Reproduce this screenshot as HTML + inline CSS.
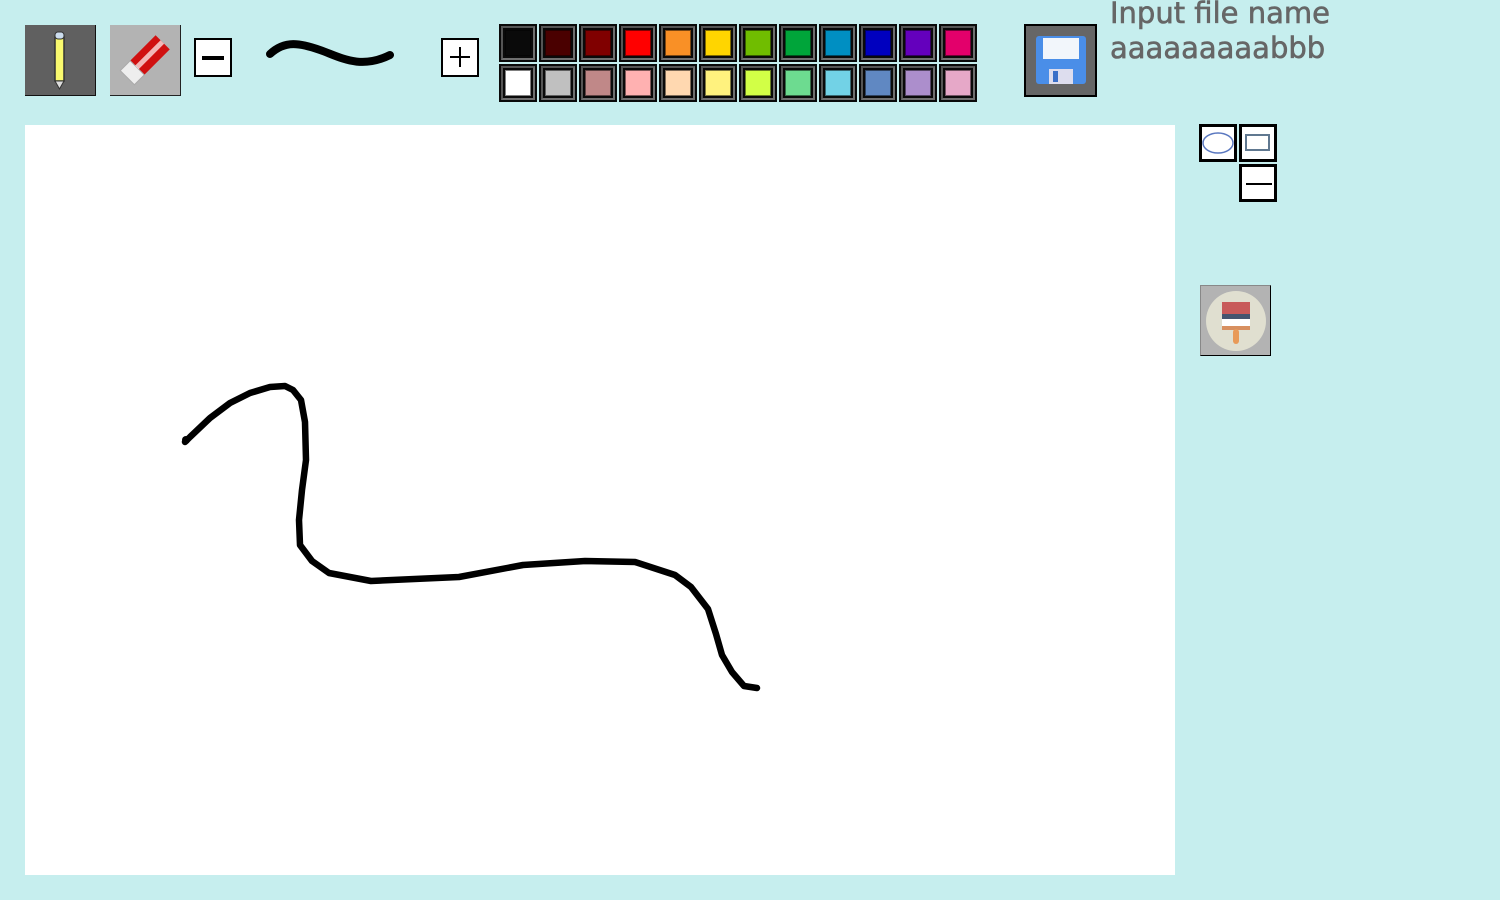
<!DOCTYPE html>
<html><head><style>
body{margin:0;width:1500px;height:900px;background:#c6eeee;position:relative;overflow:hidden;font-family:"DejaVu Sans","Liberation Sans",sans-serif}
.a{position:absolute;box-sizing:border-box}
.sw{position:absolute;width:38px;height:38px;background:#0a0a0a}
.sw i{position:absolute;left:2px;top:2px;width:34px;height:34px;box-sizing:border-box;border:2px solid #6f6f6f;border-top-color:#555;border-left-color:#555}
.sw b{position:absolute;left:6px;top:6px;width:26px;height:26px;border:1px solid rgba(0,0,0,.5);box-sizing:border-box}
.box{background:#fff;border:2px solid #000}
</style></head><body>
<div class="a" style="left:25px;top:25px;width:71px;height:71px;background:#606060;border-right:1px solid #111;border-bottom:1px solid #111">
<svg width="71" height="71"><rect x="30" y="12" width="9" height="44" fill="#fafa6e" stroke="#333" stroke-width="1.5"/><rect x="30" y="7" width="9" height="7" rx="3" fill="#cde" stroke="#333"/><path d="M30 56 L34.5 64 L39 56Z" fill="#ddd" stroke="#333"/></svg></div>
<div class="a" style="left:110px;top:25px;width:71px;height:71px;background:#b3b3b3;border-right:1px solid #222;border-bottom:1px solid #222">
<svg width="71" height="71"><g transform="rotate(-45 35 35)"><rect x="10" y="25" width="50" height="20" fill="#d01010"/><rect x="10" y="25" width="14" height="20" fill="#eee" stroke="#aaa"/><rect x="24" y="32" width="36" height="5" fill="#fff" opacity=".7"/></g></svg></div>
<div class="a box" style="left:194px;top:38px;width:38px;height:39px"><div class="a" style="left:6px;top:16px;width:22px;height:4px;background:#000"></div></div>
<svg class="a" style="left:260px;top:35px" width="140" height="40"><path d="M10 19 C25 5,40 8,60 15 S100 35,130 20" fill="none" stroke="#000" stroke-width="8" stroke-linecap="round"/></svg>
<div class="a box" style="left:441px;top:38px;width:38px;height:39px"><div class="a" style="left:7px;top:16px;width:20px;height:2px;background:#000"></div><div class="a" style="left:16px;top:7px;width:2px;height:20px;background:#000"></div></div>
<div id="pal"></div>
<div class="a" style="left:1024px;top:24px;width:73px;height:73px;background:#666;border:2px solid #000">
<svg width="69" height="69"><rect x="10" y="10" width="50" height="48" rx="3" fill="#4a8ee8"/><rect x="17" y="12" width="36" height="21" fill="#f2f6fb"/><rect x="23" y="43" width="24" height="15" fill="#dde"/><rect x="27" y="45" width="5" height="11" fill="#3a6fc8"/></svg></div>
<div class="a" style="left:1110px;top:-4px;font-size:29px;line-height:35px;color:#666;-webkit-text-stroke:0.6px #666">Input file name<br>aaaaaaaaabbb</div>
<div class="a" style="left:25px;top:125px;width:1150px;height:750px;background:#fff"></div>
<svg class="a" style="left:0;top:0" width="1500" height="900"><polyline points="185,442 190,437 210,418 230,403 250,393 270,387 285,386 293,390 301,400 305,422 306,460 302,490 299,520 300,545 312,561 329,573 371,581 459,577 523,565 585,561 635,562 675,575 691,587 708,609 716,634 722,655 732,672 744,686 757,688" fill="none" stroke="#000" stroke-width="6.5" stroke-linejoin="round" stroke-linecap="round"/><circle cx="186" cy="440" r="4"/></svg>
<div class="a box" style="left:1199px;top:124px;width:38px;height:38px;border-width:3px"><svg width="32" height="32"><ellipse cx="16" cy="16" rx="15" ry="10" fill="none" stroke="#5a78c0" stroke-width="1.5"/></svg></div>
<div class="a box" style="left:1239px;top:124px;width:38px;height:38px;border-width:3px"><div class="a" style="left:3px;top:7px;width:25px;height:17px;border:2px solid #607890"></div></div>
<div class="a box" style="left:1239px;top:164px;width:38px;height:38px;border-width:3px"><div class="a" style="left:4px;top:16px;width:26px;height:2px;background:#000"></div></div>
<div class="a" style="left:1200px;top:285px;width:71px;height:71px;background:#b3b3b3;border:1px solid #888;border-right-color:#000;border-bottom-color:#000">
<svg width="70" height="70"><circle cx="35" cy="35" r="30" fill="#e0dfd0"/><rect x="21" y="16" width="28" height="13" fill="#c85a5a"/><rect x="21" y="28" width="28" height="5" fill="#455570"/><rect x="21" y="33" width="28" height="8" fill="#fff"/><rect x="21" y="40" width="28" height="4" fill="#d89060"/><rect x="32" y="43" width="6" height="15" rx="3" fill="#e89a58"/></svg></div>
<script>
var c1=["#0a0a0a","#4a0000","#800000","#ff0000","#f99026","#ffd500","#70bd00","#00a53a","#008fc2","#0000bf","#6400bd","#e3006b"],
c2=["#ffffff","#c0c0c0","#c08888","#ffb1b1","#ffd8b0","#fff27e","#d2ff46","#6ddb90","#72d2e6","#6088c2","#ac8ecc","#e6a8c8"],h="";
for(var i=0;i<12;i++){h+='<div class="sw" style="left:'+(499+40*i)+'px;top:24px"><i></i><b style="background:'+c1[i]+'"></b></div>';
h+='<div class="sw" style="left:'+(499+40*i)+'px;top:64px"><i></i><b style="background:'+c2[i]+'"></b></div>';}
document.getElementById("pal").innerHTML=h;
</script>
</body></html>
